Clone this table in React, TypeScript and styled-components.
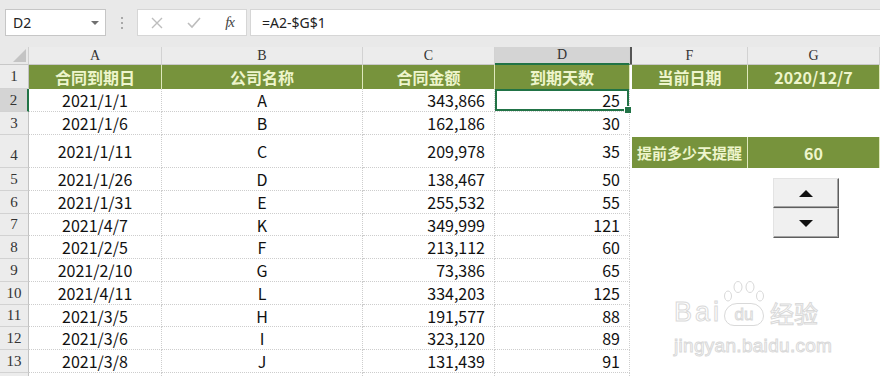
import React from 'react';
import styled, { createGlobalStyle } from 'styled-components';

const GREEN = '#77933c';
const SELECT = '#217346';
const HEAD_TEXT = '#eef5cc';
const MARK = '#d9d9d9';

const GlobalStyle = createGlobalStyle`
  html, body {
    margin: 0;
    padding: 0;
    background: #fff;
  }
  body {
    font-family: "Noto Sans CJK SC", "Noto Sans", sans-serif;
  }
  * {
    box-sizing: border-box;
  }
`;

const Window = styled.div`
  position: relative;
  width: 880px;
  height: 376px;
  overflow: hidden;
  background: #e9e9e9;
`;

const FormulaBar = styled.div`
  display: flex;
  align-items: center;
  height: 36px;
  padding: 9px 0 0 5px;
`;

const NameBox = styled.div`
  width: 101px;
  height: 27px;
  display: flex;
  align-items: center;
  justify-content: space-between;
  padding: 0 6px 0 7px;
  background: #fff;
  border: 1px solid #c6c6c6;
  font-family: "Noto Sans", "Liberation Sans", sans-serif;
  font-size: 14px;
  color: #222;
`;

const Caret = styled.span`
  width: 0;
  height: 0;
  border-left: 4px solid transparent;
  border-right: 4px solid transparent;
  border-top: 4px solid #707070;
`;

const Grip = styled.div`
  width: 31px;
  display: flex;
  flex-direction: column;
  align-items: center;
  gap: 3px;
`;

const GripDot = styled.span`
  width: 2px;
  height: 2px;
  background: #a8a8a8;
`;

const FxBox = styled.div`
  width: 110px;
  height: 27px;
  display: flex;
  align-items: center;
  justify-content: space-between;
  padding: 0 12px 0 13px;
  background: #fff;
  border: 1px solid #d6d6d6;
`;

const Fx = styled.span`
  font-family: "Liberation Serif", serif;
  font-style: italic;
  font-size: 15px;
  color: #444;
  letter-spacing: -1px;
`;

const FormulaInput = styled.div`
  flex: 1;
  height: 27px;
  margin-left: 3px;
  display: flex;
  align-items: center;
  padding-left: 11px;
  background: #fff;
  border: 1px solid #d6d6d6;
  border-right: none;
  font-family: "Noto Sans", "Liberation Sans", sans-serif;
  font-size: 14px;
  color: #222;
`;

const Sheet = styled.div`
  margin-top: 11px;
  display: grid;
  grid-template-columns: 29px 133px 201px 132px 135px 2px 116px 132px;
  grid-template-rows: 18px 24px 23px 23px 33px 23px 23px 22px 23px 23px 23px 22px 23px 23px 23px;
  background: #fff;
`;

const Corner = styled.div`
  display: flex;
  align-items: flex-end;
  justify-content: flex-end;
  padding: 0 2px 2px 0;
  background: #e9e9e9;
  border-right: 1px solid #d0d0d0;
  border-bottom: 1px solid #c8c8c8;
`;

const ColHead = styled.div<{ $active?: boolean; $hidden?: boolean }>`
  display: flex;
  align-items: center;
  justify-content: center;
  background: ${(p) => (p.$active ? '#d4d4d4' : '#ececec')};
  border-right: 1px solid ${(p) => (p.$hidden ? '#555' : '#d2d2d2')};
  border-left: ${(p) => (p.$hidden ? '1px solid #555' : 'none')};
  border-bottom: ${(p) => (p.$active ? `2px solid ${SELECT}` : '1px solid #c8c8c8')};
  font-family: "Liberation Serif", serif;
  font-size: 14px;
  color: #333;
`;

const RowHead = styled.div<{ $active?: boolean; $low?: boolean }>`
  display: flex;
  align-items: ${(p) => (p.$low ? 'flex-end' : 'center')};
  justify-content: center;
  padding-bottom: ${(p) => (p.$low ? '3px' : '0')};
  background: ${(p) => (p.$active ? '#d4d4d4' : '#ececec')};
  border-right: ${(p) => (p.$active ? `2px solid ${SELECT}` : '1px solid #c2c2c2')};
  border-bottom: 1px solid #d2d2d2;
  font-family: "Liberation Serif", serif;
  font-size: 15px;
  color: #333;
`;

type Align = 'left' | 'center' | 'right';

const Cell = styled.div<{ $align?: Align; $grid?: boolean; $selected?: boolean }>`
  position: relative;
  display: flex;
  align-items: center;
  justify-content: ${(p) =>
    p.$align === 'right' ? 'flex-end' : p.$align === 'left' ? 'flex-start' : 'center'};
  padding: 0 ${(p) => (p.$align === 'right' ? '9px' : '0')} 0 0;
  background: #fff;
  border-right: ${(p) => (p.$grid ? '1px dotted #cdcdcd' : 'none')};
  border-bottom: ${(p) => (p.$grid ? '1px dotted #cdcdcd' : 'none')};
  box-shadow: ${(p) => (p.$selected ? `inset 0 0 0 2px ${SELECT}` : 'none')};
  font-size: 16px;
  color: #111;
  white-space: nowrap;

  ${(p) =>
    p.$selected &&
    `
    &::after {
      content: '';
      position: absolute;
      right: -3px;
      bottom: -3px;
      width: 6px;
      height: 6px;
      background: ${SELECT};
      border: 1px solid #fff;
      z-index: 2;
    }
  `}
`;

const HeadCell = styled.div<{ $size?: number; $inset?: boolean }>`
  display: flex;
  align-items: center;
  justify-content: center;
  margin-top: ${(p) => (p.$inset ? '2px' : '0')};
  background: ${GREEN};
  border-right: 1px solid #dfe8bd;
  color: ${HEAD_TEXT};
  font-size: ${(p) => p.$size || 16}px;
  font-weight: 700;
  white-space: nowrap;
`;

const Spinner = styled.div`
  position: absolute;
  left: 773px;
  top: 178px;
  width: 66px;
  display: flex;
  flex-direction: column;
`;

const SpinButton = styled.div`
  height: 30px;
  display: flex;
  align-items: center;
  justify-content: center;
  background: #f0f0f0;
  border: 1px solid;
  border-color: #e3e3e3 #5e5e5e #5e5e5e #e3e3e3;
  box-shadow: inset -1px -1px 0 #a3a3a3;
`;

const Arrow = styled.span<{ $up?: boolean }>`
  width: 0;
  height: 0;
  border-left: 7px solid transparent;
  border-right: 7px solid transparent;
  ${(p) => (p.$up ? 'border-bottom: 7px solid #111;' : 'border-top: 7px solid #111;')}
`;

const Watermark = styled.div`
  position: absolute;
  left: 674px;
  top: 280px;
  display: flex;
  flex-direction: column;
  pointer-events: none;
  font-family: "Liberation Sans", Arial, sans-serif;
  color: #fff;
  -webkit-text-stroke: 1px ${MARK};
`;

const MarkTop = styled.div`
  display: flex;
  align-items: flex-end;
  height: 46px;
`;

const MarkBai = styled.span`
  font-size: 27px;
  line-height: 27px;
  letter-spacing: 3px;
`;

const Paw = styled.span`
  position: relative;
  width: 44px;
  height: 46px;
  display: flex;
  align-items: flex-end;
  justify-content: center;
`;

const PawToes = styled.svg`
  position: absolute;
  left: 0;
  top: 0;
`;

const PawPad = styled.span`
  width: 40px;
  height: 23px;
  display: flex;
  align-items: center;
  justify-content: center;
  border: 1px solid ${MARK};
  border-radius: 18px 18px 14px 14px;
  font-size: 17px;
  line-height: 17px;
`;

const MarkCn = styled.span`
  margin-left: 4px;
  font-family: "Noto Sans CJK SC", sans-serif;
  font-size: 24px;
  line-height: 26px;
`;

const MarkUrl = styled.span`
  margin-top: 10px;
  font-size: 19px;
  line-height: 19px;
  letter-spacing: 0.3px;
`;

const rows = [
  ['2021/1/1', 'A', '343,866', '25'],
  ['2021/1/6', 'B', '162,186', '30'],
  ['2021/1/11', 'C', '209,978', '35'],
  ['2021/1/26', 'D', '138,467', '50'],
  ['2021/1/31', 'E', '255,532', '55'],
  ['2021/4/7', 'K', '349,999', '121'],
  ['2021/2/5', 'F', '213,112', '60'],
  ['2021/2/10', 'G', '73,386', '65'],
  ['2021/4/11', 'L', '334,203', '125'],
  ['2021/3/5', 'H', '191,577', '88'],
  ['2021/3/6', 'I', '323,120', '89'],
  ['2021/3/8', 'J', '131,439', '91'],
  ['', '', '', ''],
];

function CrossIcon() {
  return (
    <svg width="12" height="12" viewBox="0 0 12 12">
      <path d="M1 1 L11 11 M11 1 L1 11" stroke="#bdbdbd" strokeWidth="1.4" fill="none" />
    </svg>
  );
}

function CheckIcon() {
  return (
    <svg width="14" height="12" viewBox="0 0 14 12">
      <path d="M1 6 L5 10 L13 1" stroke="#bdbdbd" strokeWidth="1.6" fill="none" />
    </svg>
  );
}

function CornerMark() {
  return (
    <svg width="13" height="13" viewBox="0 0 13 13">
      <path d="M13 0 L13 13 L0 13 Z" fill="#c4c4c4" />
    </svg>
  );
}

export default function App() {
  return (
    <Window>
      <GlobalStyle />
      <FormulaBar>
        <NameBox>
          D2
          <Caret />
        </NameBox>
        <Grip>
          <GripDot />
          <GripDot />
          <GripDot />
        </Grip>
        <FxBox>
          <CrossIcon />
          <CheckIcon />
          <Fx>fx</Fx>
        </FxBox>
        <FormulaInput>=A2-$G$1</FormulaInput>
      </FormulaBar>

      <Sheet>
        <Corner>
          <CornerMark />
        </Corner>
        <ColHead>A</ColHead>
        <ColHead>B</ColHead>
        <ColHead>C</ColHead>
        <ColHead $active>D</ColHead>
        <ColHead $hidden />
        <ColHead>F</ColHead>
        <ColHead>G</ColHead>

        <RowHead>1</RowHead>
        <HeadCell>合同到期日</HeadCell>
        <HeadCell>公司名称</HeadCell>
        <HeadCell>合同金额</HeadCell>
        <HeadCell>到期天数</HeadCell>
        <Cell />
        <HeadCell>当前日期</HeadCell>
        <HeadCell>2020/12/7</HeadCell>

        {rows.map((r, i) => {
          const n = i + 2;
          const last = i === rows.length - 1;
          return (
            <React.Fragment key={n}>
              <RowHead $active={n === 2} $low={n === 4}>
                {last ? '' : n}
              </RowHead>
              <Cell $grid>{r[0]}</Cell>
              <Cell $grid>{r[1]}</Cell>
              <Cell $grid $align="right">
                {r[2]}
              </Cell>
              <Cell $grid $align="right" $selected={n === 2}>
                {r[3]}
              </Cell>
              <Cell />
              {n === 4 ? (
                <>
                  <HeadCell $size={15} $inset>
                    提前多少天提醒
                  </HeadCell>
                  <HeadCell $inset>60</HeadCell>
                </>
              ) : (
                <>
                  <Cell />
                  <Cell />
                </>
              )}
            </React.Fragment>
          );
        })}
      </Sheet>

      <Spinner>
        <SpinButton>
          <Arrow $up />
        </SpinButton>
        <SpinButton>
          <Arrow />
        </SpinButton>
      </Spinner>

      <Watermark>
        <MarkTop>
          <MarkBai>Bai</MarkBai>
          <Paw>
            <PawToes width="44" height="24" viewBox="0 0 44 24">
              <ellipse cx="6" cy="16" rx="3.5" ry="5" fill="#fff" stroke={MARK} />
              <ellipse cx="16" cy="7" rx="4" ry="5.5" fill="#fff" stroke={MARK} />
              <ellipse cx="28" cy="7" rx="4" ry="5.5" fill="#fff" stroke={MARK} />
              <ellipse cx="38" cy="16" rx="3.5" ry="5" fill="#fff" stroke={MARK} />
            </PawToes>
            <PawPad>du</PawPad>
          </Paw>
          <MarkCn>经验</MarkCn>
        </MarkTop>
        <MarkUrl>jingyan.baidu.com</MarkUrl>
      </Watermark>
    </Window>
  );
}
